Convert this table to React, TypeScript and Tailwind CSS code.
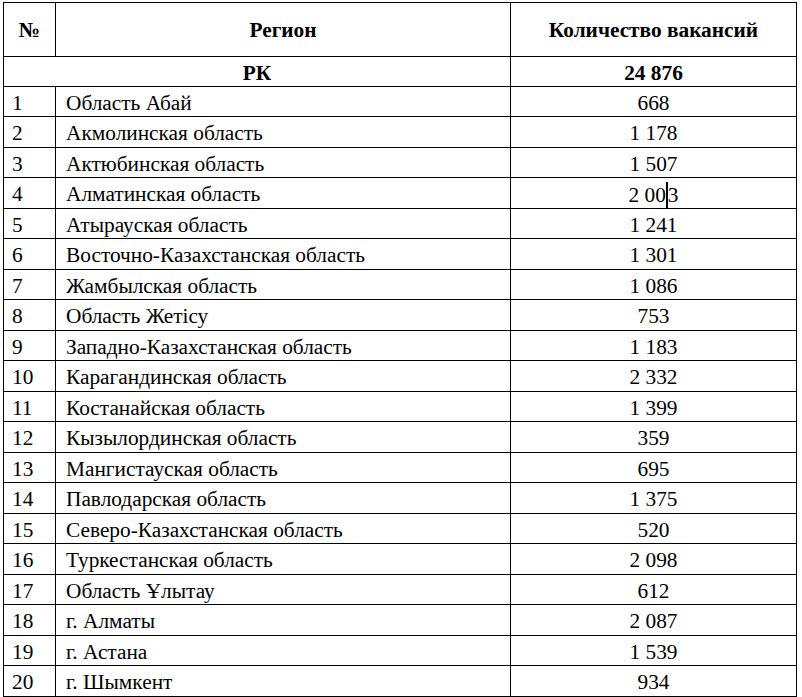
import React from 'react';

// Vacancies by region (RK)
interface Row {
  n: number;
  region: string;
  count: string;
}

const rows: Row[] = [
  { n: 1, region: "Область Абай", count: "668" },
  { n: 2, region: "Акмолинская область", count: "1 178" },
  { n: 3, region: "Актюбинская область", count: "1 507" },
  { n: 4, region: "Алматинская область", count: "2 003" },
  { n: 5, region: "Атырауская область", count: "1 241" },
  { n: 6, region: "Восточно-Казахстанская область", count: "1 301" },
  { n: 7, region: "Жамбылская область", count: "1 086" },
  { n: 8, region: "Область Жетісу", count: "753" },
  { n: 9, region: "Западно-Казахстанская область", count: "1 183" },
  { n: 10, region: "Карагандинская область", count: "2 332" },
  { n: 11, region: "Костанайская область", count: "1 399" },
  { n: 12, region: "Кызылординская область", count: "359" },
  { n: 13, region: "Мангистауская область", count: "695" },
  { n: 14, region: "Павлодарская область", count: "1 375" },
  { n: 15, region: "Северо-Казахстанская область", count: "520" },
  { n: 16, region: "Туркестанская область", count: "2 098" },
  { n: 17, region: "Область Ұлытау", count: "612" },
  { n: 18, region: "г. Алматы", count: "2 087" },
  { n: 19, region: "г. Астана", count: "1 539" },
  { n: 20, region: "г. Шымкент", count: "934" },
];

const grid = "grid grid-cols-[52px_455px_286px] border-b border-black";
const cell = "font-['Liberation_Serif',serif] border-r border-black pt-[4px]";
const head = "font-['Liberation_Serif',serif] border-r border-black pt-[15px] text-center";

function Count({ value }: { value: string }) {
  // the screenshot shows a text caret inside "2 003"
  if (value === "2 003") {
    return (
      <span>
        2 00
        <span className="inline-block w-[2px] h-[26px] bg-black align-[-6px]" />
        3
      </span>
    );
  }
  return <span>{value}</span>;
}

export default function App() {
  return (
    <div className="[font-family:Liberation_Serif,serif] font-['Liberation_Serif',serif]">
      <div className="min-h-screen bg-white pt-[2px] pl-[3px] text-black text-[21.33px] leading-[24px]">
        <div className="w-[794px] border-t border-l border-black">
          <div className={`${grid} h-[54px] font-bold`}>
            <div className={head}>№</div>
            <div className={head}>Регион</div>
            <div className={head}>Количество вакансий</div>
          </div>

          <div className="grid grid-cols-[507px_286px] border-b border-black h-[30px] font-bold">
            <div className={`${cell} text-center`}>РК</div>
            <div className={`${cell} text-center`}>24 876</div>
          </div>

          {rows.map((r, i) => (
            <div key={r.n} className={`${grid} ${i % 2 === 0 ? "h-[30px]" : "h-[31px]"}`}>
              <div className={`${cell} pl-[8px]`}>{r.n}</div>
              <div className={`${cell} pl-[10px] whitespace-nowrap`}>{r.region}</div>
              <div className={`${cell} text-center`}>
                <Count value={r.count} />
              </div>
            </div>
          ))}
        </div>
      </div>
    </div>
  );
}
